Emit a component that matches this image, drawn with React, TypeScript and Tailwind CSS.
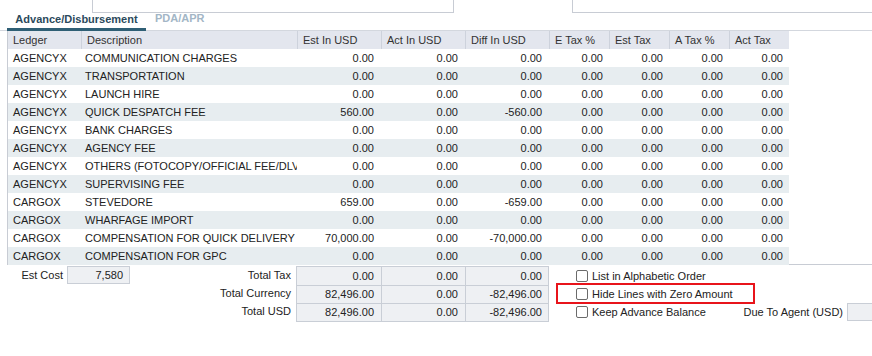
import React from "react";

const rows: [string, string, string, string, string][] = [
  ["AGENCYX", "COMMUNICATION CHARGES", "0.00", "0.00", "0.00"],
  ["AGENCYX", "TRANSPORTATION", "0.00", "0.00", "0.00"],
  ["AGENCYX", "LAUNCH HIRE", "0.00", "0.00", "0.00"],
  ["AGENCYX", "QUICK DESPATCH FEE", "560.00", "0.00", "-560.00"],
  ["AGENCYX", "BANK CHARGES", "0.00", "0.00", "0.00"],
  ["AGENCYX", "AGENCY FEE", "0.00", "0.00", "0.00"],
  ["AGENCYX", "OTHERS (FOTOCOPY/OFFICIAL FEE/DLVRY)", "0.00", "0.00", "0.00"],
  ["AGENCYX", "SUPERVISING FEE", "0.00", "0.00", "0.00"],
  ["CARGOX", "STEVEDORE", "659.00", "0.00", "-659.00"],
  ["CARGOX", "WHARFAGE IMPORT", "0.00", "0.00", "0.00"],
  ["CARGOX", "COMPENSATION FOR QUICK DELIVERY", "70,000.00", "0.00", "-70,000.00"],
  ["CARGOX", "COMPENSATION FOR GPC", "0.00", "0.00", "0.00"],
];

const headers = [
  { label: "Ledger", w: "w-[73px]" },
  { label: "Description", w: "w-[216px]" },
  { label: "Est In USD", w: "w-[84px]" },
  { label: "Act In USD", w: "w-[84px]" },
  { label: "Diff In USD", w: "w-[84px]" },
  { label: "E Tax %", w: "w-[60px]" },
  { label: "Est Tax", w: "w-[60px]" },
  { label: "A Tax %", w: "w-[60px]" },
  { label: "Act Tax", w: "w-[60px]" },
];

const totals = [
  ["0.00", "0.00", "0.00"],
  ["82,496.00", "0.00", "-82,496.00"],
  ["82,496.00", "0.00", "-82,496.00"],
];

const Check = ({ label }: { label: string }) => (
  <div className="flex items-center h-[18px] whitespace-nowrap">
    <span className="shrink-0 w-[12px] h-[12px] border border-[#6b6b6b] rounded-[2px] bg-white" />
    <span className="ml-[4px]">{label}</span>
  </div>
);

export default function App() {
  return (
    <div
      className="w-[872px] h-[356px] overflow-hidden bg-white text-[11px] text-[#222]"
      style={{ fontFamily: '"Liberation Sans", Arial, sans-serif' }}
    >
      {/* top inputs, cut off */}
      <div className="flex h-[13px]">
        <div className="ml-[92px] w-[362px] h-[13px] border-x border-b border-[#c8ccd4]" />
        <div className="ml-[118px] flex-1 h-[13px] border-l border-b border-[#c8ccd4]" />
      </div>

      {/* tabs */}
      <div className="flex items-end h-[18px] border-b border-[#d3d7de]">
        <div className="ml-[7px] w-[139px] h-[18px] flex items-start justify-center border-b-[3px] border-[#2f5f75] -mb-px">
          <span className="font-bold text-[11px] text-[#2b4a5c] leading-[12px]">Advance/Disbursement</span>
        </div>
        <div className="ml-[9px] h-[18px] flex items-start">
          <span className="font-bold text-[11px] text-[#a3b6c6] leading-[12px]">PDA/APR</span>
        </div>
      </div>

      {/* grid */}
      <div className="ml-[7px] h-[234px] border-l border-b border-[#c8ccd4]">
        <div className="flex h-[18px]">
          {headers.map((h, i) => (
            <div
              key={h.label}
              className={`${h.w} h-[18px] bg-[#e3e6ee] flex items-center pl-[5px] text-[#333] ${
                i > 0 ? "border-l border-[#cdd2dc]" : ""
              }`}
            >
              {h.label}
            </div>
          ))}
        </div>
        {rows.map((r, i) => (
          <div
            key={i}
            className={`flex h-[18px] w-[781px] items-center ${i % 2 === 1 ? "bg-[#e7edf0]" : "bg-white"}`}
          >
            <div className="w-[73px] pl-[5px]">{r[0]}</div>
            <div className="w-[216px] pl-[4px] whitespace-nowrap overflow-hidden">{r[1]}</div>
            <div className="w-[84px] text-right pr-[7px]">{r[2]}</div>
            <div className="w-[84px] text-right pr-[7px]">{r[3]}</div>
            <div className="w-[84px] text-right pr-[7px]">{r[4]}</div>
            <div className="w-[60px] text-right pr-[6px]">0.00</div>
            <div className="w-[60px] text-right pr-[6px]">0.00</div>
            <div className="w-[60px] text-right pr-[6px]">0.00</div>
            <div className="w-[60px] text-right pr-[6px]">0.00</div>
          </div>
        ))}
      </div>

      {/* footer */}
      <div className="flex pt-px whitespace-nowrap">
        <div className="shrink-0 w-[63px] h-[18px] flex items-center justify-end">Est Cost</div>
        <div className="shrink-0 ml-[4px] w-[63px] h-[18px] bg-[#eef0f3] border border-[#c9ced6] flex items-center justify-end pr-[6px]">
          7,580
        </div>
        <div className="shrink-0 w-[166px] flex flex-col items-end pr-[5px]">
          <div className="h-[18px] flex items-center">Total Tax</div>
          <div className="h-[18px] flex items-center">Total Currency</div>
          <div className="h-[18px] flex items-center">Total USD</div>
        </div>
        <div className="shrink-0 w-[253px] border border-[#c9ced6] bg-[#eef0f3]">
          {totals.map((t, i) => (
            <div key={i} className={`flex h-[18px] ${i > 0 ? "border-t border-[#c9ced6]" : ""}`}>
              <div className="w-[84px] flex items-center justify-end pr-[7px]">{t[0]}</div>
              <div className="w-[84px] flex items-center justify-end pr-[7px] border-l border-[#c9ced6]">{t[1]}</div>
              <div className="w-[83px] flex items-center justify-end pr-[6px] border-l border-[#c9ced6]">{t[2]}</div>
            </div>
          ))}
        </div>
        <div className="shrink-0 ml-[27px] pt-px">
          <Check label="List in Alphabetic Order" />
          <div className="relative">
            <Check label="Hide Lines with Zero Amount" />
            <div className="absolute left-[-20px] top-[-2px] w-[199px] h-[21px] border-2 border-[#e8141b]" />
          </div>
          <Check label="Keep Advance Balance" />
        </div>
        <div className="shrink-0 flex-1 flex items-end justify-end pb-px">
          <div className="h-[18px] flex items-center">Due To Agent (USD)</div>
          <div className="shrink-0 ml-[4px] w-[25px] h-[18px] bg-[#eef0f3] border border-r-0 border-[#c9ced6]" />
        </div>
      </div>
    </div>
  );
}
